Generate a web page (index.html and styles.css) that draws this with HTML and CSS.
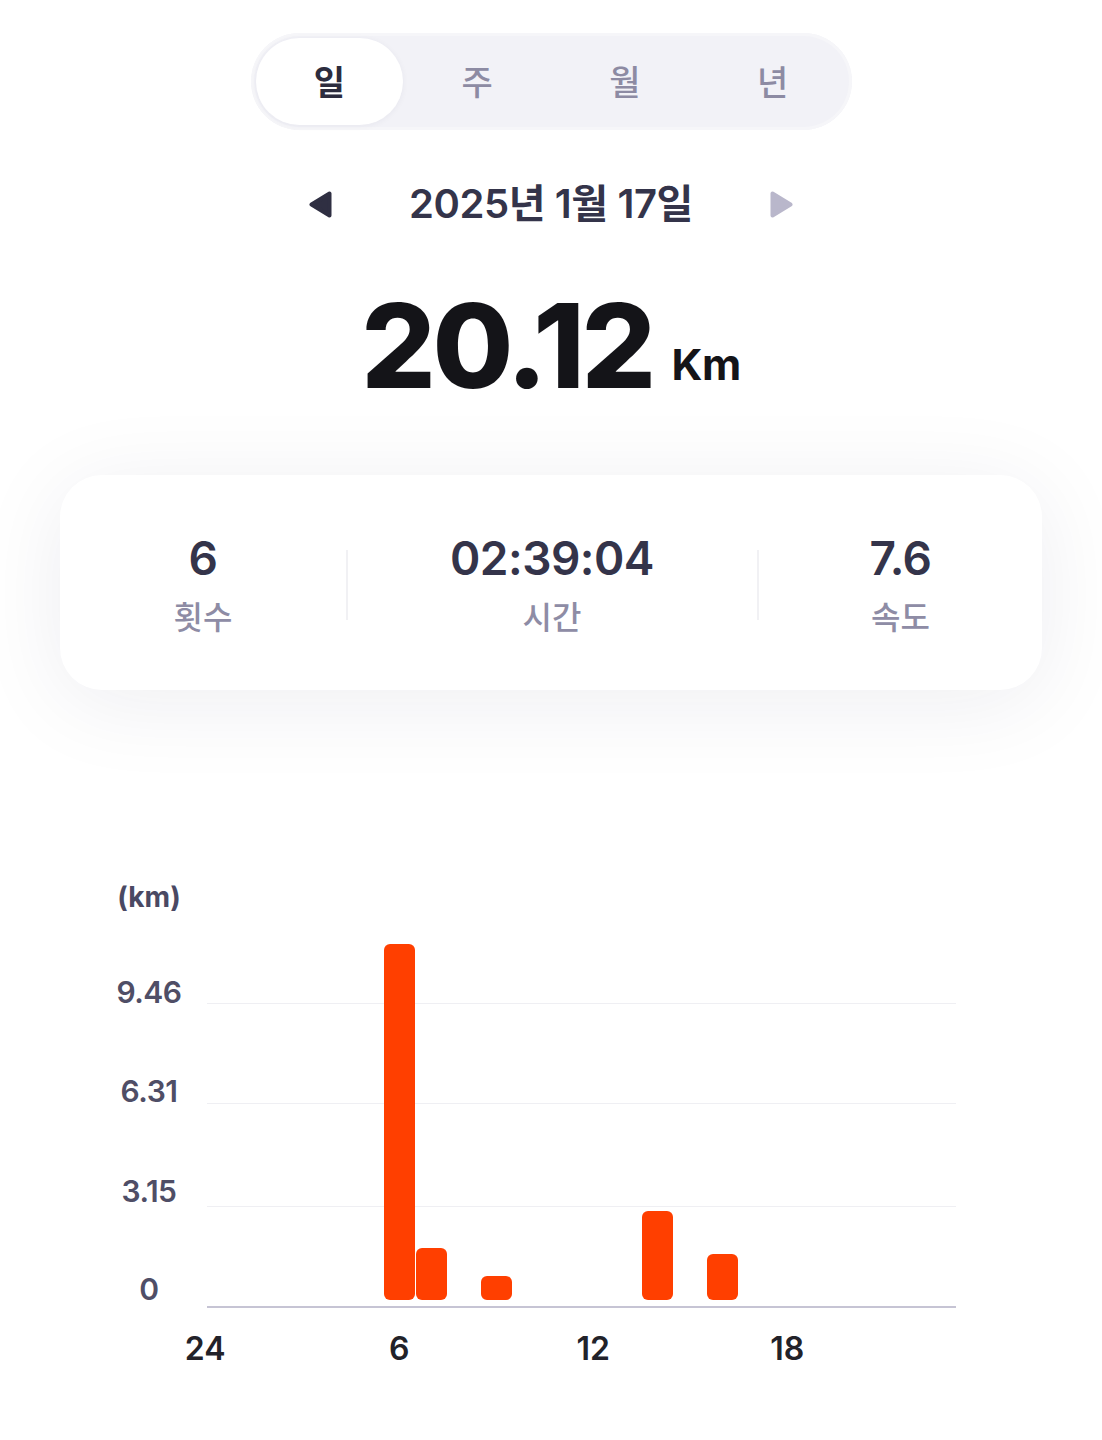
FILE: index.html
```html
<!DOCTYPE html>
<html lang="ko">
<head>
<meta charset="utf-8">
<title>기록</title>
<link rel="stylesheet" href="styles.css">
</head>
<body>
<main class="page">
  <nav class="segment">
    <div class="seg-item active">일</div>
    <div class="seg-item">주</div>
    <div class="seg-item">월</div>
    <div class="seg-item">년</div>
  </nav>

  <div class="date-row">
    <svg class="arrow" width="23" height="27" viewBox="0 0 23 27"><path d="M20.5 2.5 L20.5 24.5 L2.5 13.5 Z" fill="#2f2f42" stroke="#2f2f42" stroke-width="4" stroke-linejoin="round"/></svg>
    <div class="date-text">2025년 1월 17일</div>
    <svg class="arrow" width="23" height="27" viewBox="0 0 23 27"><path d="M2.5 2.5 L2.5 24.5 L20.5 13.5 Z" fill="#b9b7cb" stroke="#b9b7cb" stroke-width="4" stroke-linejoin="round"/></svg>
  </div>

  <div class="total"><span class="total-num">20.12</span><span class="total-unit">Km</span></div>

  <section class="card">
    <div class="stat">
      <div class="stat-value">6</div>
      <div class="stat-label">횟수</div>
    </div>
    <div class="divider"></div>
    <div class="stat">
      <div class="stat-value">02:39:04</div>
      <div class="stat-label">시간</div>
    </div>
    <div class="divider"></div>
    <div class="stat">
      <div class="stat-value">7.6</div>
      <div class="stat-label">속도</div>
    </div>
  </section>

  <section class="chart">
    <div class="unit">(km)</div>
    <div class="unit-gap"></div>

    <div class="ylab y1">9.46</div>
    <div class="gline r1"></div>
    <div class="ylab y2">6.31</div>
    <div class="gline r2"></div>
    <div class="ylab y3">3.15</div>
    <div class="gline r3"></div>
    <div class="ylab y4">0</div>
    <div class="gline r4 base"></div>

    <div class="bars">
      <div class="bar" style="grid-column: 7; height: 356px"></div>
      <div class="bar" style="grid-column: 8; height: 52px"></div>
      <div class="bar" style="grid-column: 10; height: 24px"></div>
      <div class="bar" style="grid-column: 15; height: 89px"></div>
      <div class="bar" style="grid-column: 17; height: 46px"></div>
    </div>
  </section>

  <div class="xaxis">
    <div class="xlab" style="grid-column: 1">24</div>
    <div class="xlab" style="grid-column: 7">6</div>
    <div class="xlab" style="grid-column: 13">12</div>
    <div class="xlab" style="grid-column: 19">18</div>
  </div>
</main>
</body>
</html>
```
FILE: styles.css
```css
* { box-sizing: border-box; }
html, body { margin: 0; padding: 0; background: #ffffff; }
body {
  font-family: Inter, "Noto Sans CJK KR", "Noto Sans", sans-serif;
  width: 1102px;
  min-height: 1440px;
}
.page { padding-top: 33px; }

/* segmented control */
.segment {
  width: 601px;
  height: 97px;
  margin: 0 auto;
  padding: 5px;
  border-radius: 999px;
  background: #f2f2f7;
  box-shadow: inset 0 0 0 3px #f6f6f9;
  display: grid;
  grid-template-columns: repeat(4, minmax(0, 1fr));
}
.seg-item {
  display: flex;
  align-items: center;
  justify-content: center;
  border-radius: 999px;
  font-size: 34px;
  font-weight: 500;
  color: #8d8ba3;
  padding-bottom: 2px;
}
.seg-item.active {
  background: #ffffff;
  color: #2c2c3e;
  font-weight: 600;
  box-shadow: 0 1px 6px rgba(40, 40, 80, 0.05);
}

/* date row */
.date-row {
  margin-top: 50px;
  height: 48px;
  display: flex;
  align-items: center;
  justify-content: center;
  gap: 77px;
}
.arrow { display: block; }
.date-text {
  font-size: 40px;
  font-weight: 600;
  color: #34344a;
  letter-spacing: -0.4px;
  line-height: 48px;
  white-space: nowrap;
}

/* total distance */
.total {
  margin-top: 59px;
  text-align: center;
  line-height: 117px;
  height: 117px;
  white-space: nowrap;
}
.total-num {
  font-size: 117px;
  font-weight: 800;
  color: #141418;
  letter-spacing: -3.5px;
}
.total-unit {
  font-size: 43px;
  font-weight: 700;
  color: #141418;
  margin-left: 19px;
  vertical-align: 8px;
  letter-spacing: -0.5px;
}

/* stats card */
.card {
  margin: 71px 60px 0;
  height: 215px;
  background: #ffffff;
  border-radius: 42px;
  box-shadow: 0 12px 90px rgba(30, 30, 70, 0.075);
  display: grid;
  grid-template-columns: 286px 1px 410px 1px 285px;
  align-items: center;
}
.stat {
  display: flex;
  flex-direction: column;
  align-items: center;
  padding-top: 8px;
}
.stat-value {
  font-size: 46px;
  font-weight: 600;
  line-height: 46px;
  color: #34344a;
  letter-spacing: -0.5px;
}
.stat-label {
  margin-top: 17px;
  font-size: 32px;
  font-weight: 500;
  line-height: 40px;
  color: #8e8ca5;
}
.divider {
  width: 2px;
  height: 70px;
  background: #f1f1f4;
  margin-top: 4px;
}

/* chart */
.chart {
  margin-top: 190px;
  margin-left: 110px;
  display: grid;
  grid-template-columns: 78px 749px;
  column-gap: 19px;
  grid-template-rows: 34px 90px 100px 103px 101px;
}
.unit {
  grid-column: 1;
  grid-row: 1;
  text-align: center;
  font-size: 28px;
  font-weight: 700;
  line-height: 34px;
  color: #4a4963;
}
.unit-gap { grid-column: 2; grid-row: 1; }
.ylab {
  grid-column: 1;
  align-self: end;
  text-align: center;
  font-size: 30px;
  font-weight: 600;
  line-height: 30px;
  color: #4f4e66;
  letter-spacing: -0.5px;
}
.y1 { grid-row: 2; margin-bottom: -3px; }
.y2 { grid-row: 3; margin-bottom: -2px; }
.y3 { grid-row: 4; margin-bottom: 1px; }
.y4 { grid-row: 5; margin-bottom: 4px; }
.gline {
  grid-column: 2;
  border-bottom: 1px solid #efeff3;
}
.r1 { grid-row: 2; }
.r2 { grid-row: 3; }
.r3 { grid-row: 4; }
.r4 { grid-row: 5; }
.gline.base { border-bottom: 2px solid #c6c4d4; }

.bars {
  grid-column: 2;
  grid-row: 2 / 6;
  margin-left: -18px;
  width: 776px;
  padding-bottom: 8px;
  display: grid;
  grid-template-columns: repeat(24, minmax(0, 1fr));
  align-items: end;
}
.bar {
  grid-row: 1;
  width: 31px;
  justify-self: center;
  background: #ff3f00;
  border-radius: 6px;
}

.xaxis {
  margin-top: 25px;
  margin-left: 189px;
  width: 776px;
  display: grid;
  grid-template-columns: repeat(24, minmax(0, 1fr));
}
.xlab {
  grid-row: 1;
  display: flex;
  justify-content: center;
  font-size: 32px;
  font-weight: 600;
  line-height: 32px;
  color: #222229;
  white-space: nowrap;
}
```
